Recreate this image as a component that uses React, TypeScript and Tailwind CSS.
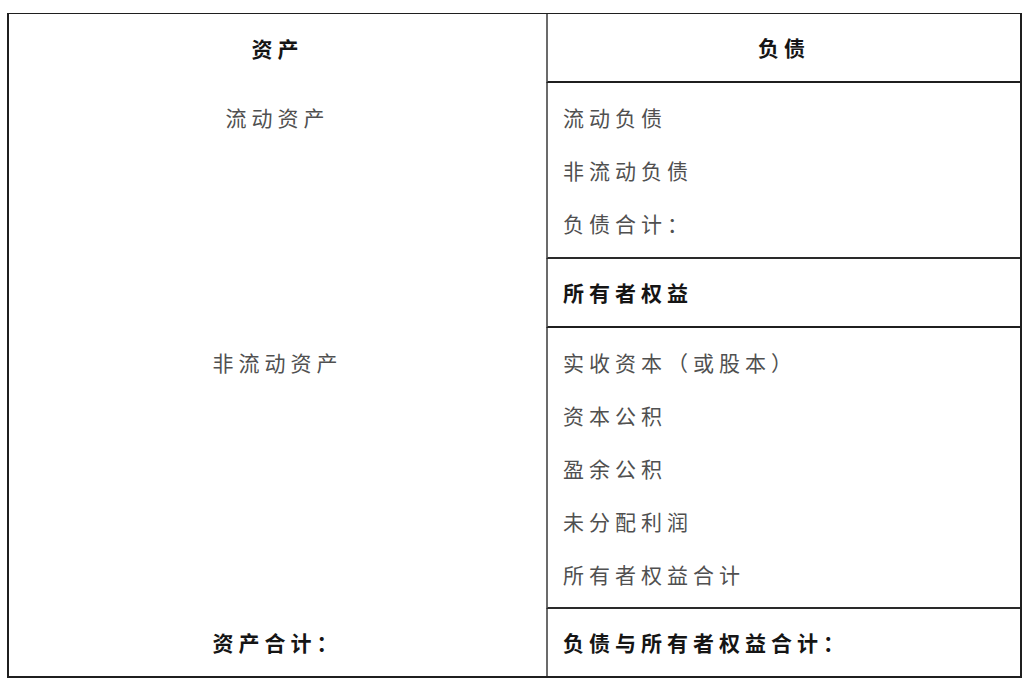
const font = { fontFamily: '"Noto Sans CJK SC", "Noto Sans", sans-serif' };

function Line({ children, bold = false }: { children: React.ReactNode; bold?: boolean }) {
  return (
    <div
      className={
        bold
          ? "leading-[53px] text-[21px] font-semibold tracking-[5px] text-[#151515]"
          : "leading-[53px] text-[21px] font-normal tracking-[5px] text-[#505050]"
      }
    >
      {children}
    </div>
  );
}

export default function App() {
  return (
    <div className="h-[689px] w-[1033px] bg-white pl-[7px] pt-[13px]" style={font}>
      <div className="grid h-[665px] w-[1015px] grid-cols-[537px_1fr] grid-rows-[69px_176px_69px_281px_1fr] border-2 border-t-[1.5px] border-[#1f1f1f]">
        {/* left column */}
        <div className="flex items-center justify-center">
          <Line bold>资产</Line>
        </div>
        <div className="py-2 text-center">
          <Line>流动资产</Line>
        </div>
        <div />
        <div className="py-2 text-center">
          <Line>非流动资产</Line>
        </div>
        <div className="py-[7px] text-center">
          <Line bold>资产合计：</Line>
        </div>

        {/* right column */}
        <div className="col-start-2 row-start-1 flex items-center justify-center border-b-2 border-l-2 border-b-[#1f1f1f] border-l-[#6b6b6b]">
          <Line bold>负债</Line>
        </div>
        <div className="col-start-2 row-start-2 border-b-2 border-l-2 border-b-[#2a2a2a] border-l-[#6b6b6b] py-2 pl-[15px]">
          <Line>流动负债</Line>
          <Line>非流动负债</Line>
          <Line>负债合计：</Line>
        </div>
        <div className="col-start-2 row-start-3 flex items-center border-b-2 border-l-2 border-b-[#1f1f1f] border-l-[#6b6b6b] pl-[15px]">
          <Line bold>所有者权益</Line>
        </div>
        <div className="col-start-2 row-start-4 border-b-2 border-l-2 border-b-[#2a2a2a] border-l-[#6b6b6b] py-2 pl-[15px]">
          <Line>实收资本（或股本）</Line>
          <Line>资本公积</Line>
          <Line>盈余公积</Line>
          <Line>未分配利润</Line>
          <Line>所有者权益合计</Line>
        </div>
        <div className="col-start-2 row-start-5 border-l-2 border-l-[#6b6b6b] py-[7px] pl-[15px]">
          <Line bold>负债与所有者权益合计：</Line>
        </div>
      </div>
    </div>
  );
}
